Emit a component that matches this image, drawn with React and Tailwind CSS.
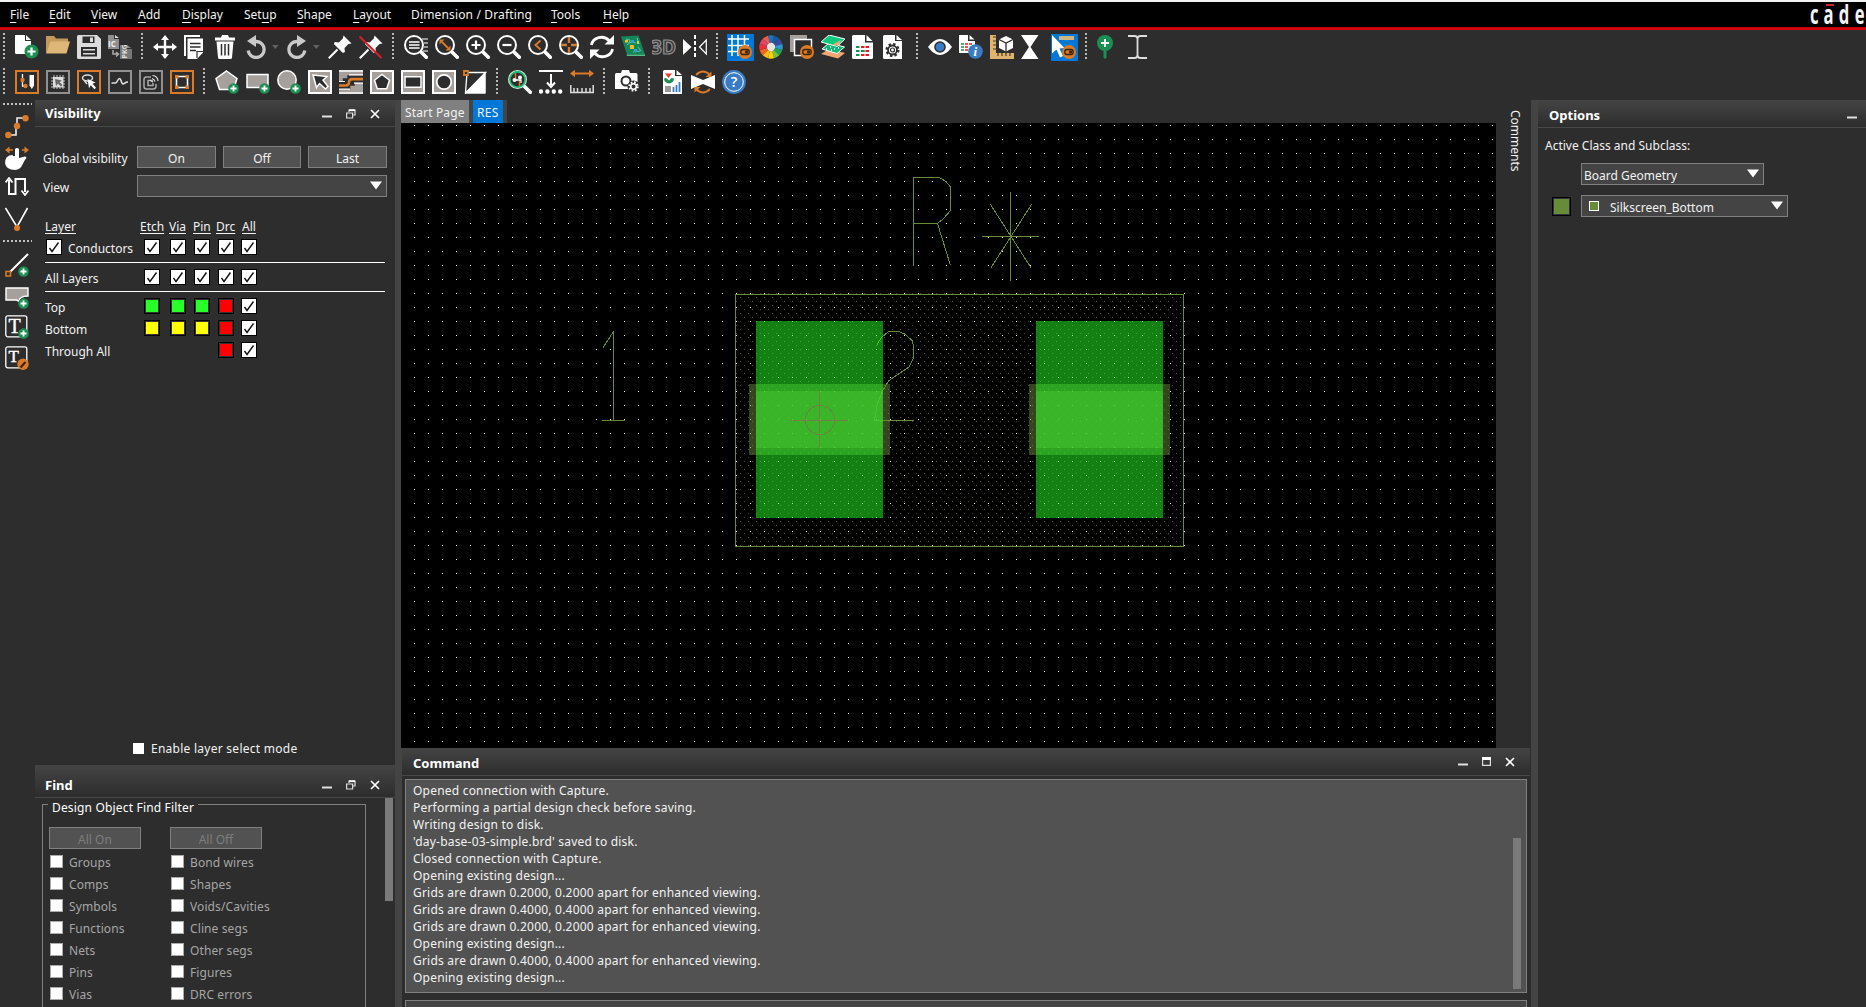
import React from "react";

const OR = "#d97b29";
const GN = "#1c8f55";

const I = ({ children, ml = "", w = 24 }) => (
  <svg width={w} height="24" viewBox={`0 0 ${w} 24`} fill="none" className={`shrink-0 ${ml}`}>
    {children}
  </svg>
);

const Plus = ({ x = 18.5, y = 18.5, r = 5.3 }) => (
  <g>
    <circle cx={x} cy={y} r={r} fill={GN} />
    <path d={`M${x - 3} ${y}h6M${x} ${y - 3}v6`} stroke="#fff" strokeWidth="1.8" />
  </g>
);

const Toggle = ({ x, y }) => (
  <g>
    <circle cx={x} cy={y} r="7" fill={OR} />
    <rect x={x - 4.2} y={y - 2.5} width="8.4" height="5" rx="2.2" stroke="#3a2210" strokeWidth="1.3" />
    <rect x={x} y={y - 1.5} width="3" height="3" rx="1" fill="#3a2210" />
  </g>
);

const Sep = ({ className = "" }) => (
  <svg width="2" height="26" className={`-mt-[2px] shrink-0 ${className}`}>
    <path d="M1 0v26" stroke="#b8b8b8" strokeWidth="2" strokeDasharray="2 2" />
  </svg>
);

const HSep = () => (
  <svg width="29" height="2" className="shrink-0">
    <path d="M0 1h29" stroke="#c0c0c0" strokeWidth="2" strokeDasharray="2 2" />
  </svg>
);

const Lens = ({ children }) => (
  <g>
    <path d="M16.5 16.5L22.3 22.3" stroke="#fff" strokeWidth="3.6" strokeLinecap="round" />
    <circle cx="10" cy="10" r="9" fill="#2d2d2d" stroke="#fff" strokeWidth="2" />
    {children}
  </g>
);

const Framed = ({ c, children, fill = "none" }) => (
  <I>
    <rect x="1" y="1" width="22" height="22" stroke={c} strokeWidth="2" fill={fill} />
    {children}
  </I>
);

const Pin = () => (
  <g>
    <path d="M15.500 .5l8 8-3 .6-4 4 .4 4-2 .9-9-9 .9-2 4 .4 4-4z" fill="#fff" />
    <path d="M9.500 14.500L.8 23.200" stroke="#fff" strokeWidth="2" />
  </g>
);

const Toolbar1 = () => (
  <div className="flex h-[28px] items-center pl-[3px]">
    <Sep />
    <div className="flex gap-[7px] pl-[10px]">
      <I>
        <path d="M0 0h10v6h6v13H1.500Q0 19 0 17.500z" fill="#fff" />
        <path d="M11 0v5h5z" fill="#fff" />
        <circle cx="16.500" cy="16.500" r="7" fill={GN} />
        <path d="M12.500 16.500h8M16.500 12.500v8" stroke="#fff" strokeWidth="2.200" />
      </I>
      <I>
        <path d="M0 1h8l2 2.500h12V8H5L0 18z" fill="#c49a5c" />
        <path d="M4.500 6.500H24L20.500 18.500H0z" fill="#deb778" />
      </I>
      <I>
        <path d="M1.500 0H20l4 4v18.500q0 1.500-1.500 1.500h-21Q0 24 0 22.500v-21Q0 0 1.500 0z" fill="#dcdcdc" />
        <path d="M5.500 1.500h12v6.500h-12zM4 12h16v9.500H4z" fill="#2d2d2d" />
        <path d="M13 2.500h3v4.500h-3zM6 14h12v1.500H6zM6 18h12v1.500H6z" fill="#dcdcdc" />
      </I>
      <I>
        <path d="M0 0h6v4h5v10H0z" fill="#8f8f8f" />
        <path d="M7 0v3h4z" fill="#ddd" />
        <text x="0" y="12" fontSize="8" fontWeight="700" fill="#eee" fontFamily="Open Sans, sans-serif">IC</text>
        <path d="M12 10h6v4h6v10H12z" fill="#777" />
        <path d="M19 10v3h4z" fill="#888" />
        <text x="0" y="0" transform="translate(18.500 23.500) rotate(-90)" fontSize="7" fontWeight="700" fill="#ddd" fontFamily="Open Sans, sans-serif">PKG</text>
        <path d="M5 15v4h5M8 17l2.500 2L8 21.500" stroke="#aaa" strokeWidth="1.500" />
      </I>
    </div>
    <Sep className="ml-[9px]" />
    <div className="flex gap-[7px] pl-[10px]">
      <I>
        <path d="M12 3v18M3 12h18" stroke="#fff" strokeWidth="2.400" />
        <path d="M12 0l4 5H8zM12 24l4-5H8zM0 12l5-4v8zM24 12l-5-4v8z" fill="#fff" />
      </I>
      <I>
        <path d="M0 0h16v2H2v19H0z" fill="#fff" />
        <path d="M3.500 3.500h15.500v14L13 24H3.500z" fill="#fff" />
        <path d="M6 8.500h10.500M6 12h10.500M6 15.500h6" stroke="#2d2d2d" strokeWidth="1.600" />
        <path d="M13 23v-6.500h6" stroke="#2d2d2d" strokeWidth="1.200" />
      </I>
      <I>
        <path d="M7 0h6l1 2.500h6v3H0v-3h6zM1.500 6.500h17L17 22.500q0 1.500-1.500 1.500h-11Q3 24 3 22.500z" fill="#fff" />
        <path d="M6.500 9v11.500M10 9v11.500M13.500 9v11.500" stroke="#2d2d2d" strokeWidth="1.500" />
      </I>
      <I>
        <path d="M8 6.500H10.500A8 8 0 1 1 2.200 15.500" stroke="#c9c9c9" strokeWidth="3.300" />
        <path d="M10 0v12L1 6z" fill="#c9c9c9" />
      </I>
      <svg width="7" height="24" className="-ml-[5px] mr-px"><path d="M0 10h6.500l-3.200 4z" fill="#626262" /></svg>
      <I>
        <path d="M12 6.500H9.500A8 8 0 1 0 17.800 15.500" stroke="#c9c9c9" strokeWidth="3.300" />
        <path d="M10 0v12l9-6z" fill="#c9c9c9" />
      </I>
      <svg width="7" height="24" className="-ml-[5px] mr-px"><path d="M0 10h6.500l-3.200 4z" fill="#626262" /></svg>
      <I><Pin /></I>
      <I><Pin /><path d="M.5 1.500L22.500 23" stroke="#d3202a" strokeWidth="2" /></I>
    </div>
    <Sep className="ml-[9px]" />
    <div className="flex gap-[7px] pl-[10px]">
      <I>
        <path d="M18 4h6M20 8h4M20 12h4M19 16h5" stroke="#bbb" strokeWidth="1.600" />
        <Lens><path d="M5 7h10.500M5 10h10.500M5 13h10.500" stroke="#fff" strokeWidth="1.600" /></Lens>
      </I>
      <I><Lens><path d="M7 7l6 6" stroke={OR} strokeWidth="1.800" /><path d="M4.500 4.500h5l-5 5zM15.500 15.500h-5l5-5z" fill={OR} /></Lens></I>
      <I><Lens><path d="M5.500 10h9M10 5.500v9" stroke="#fff" strokeWidth="2.200" /></Lens></I>
      <I><Lens><path d="M5.500 10h9" stroke="#fff" strokeWidth="2.200" /></Lens></I>
      <I><Lens><path d="M12.500 5.500L7.500 10l5 4.500" stroke={OR} strokeWidth="1.900" /></Lens></I>
      <I><Lens><path d="M10 2v6M10 12v6M2 10h6M12 10h6" stroke={OR} strokeWidth="2.400" /></Lens></I>
      <I>
        <path d="M1.500 10A10 9 0 0 1 19 5.500M22.500 14A10 9 0 0 1 5 18.500" stroke="#fff" strokeWidth="2.800" />
        <path d="M24 0v9.500h-9.500zM0 24v-9.500h9.500z" fill="#fff" />
      </I>
      <I>
        <path d="M0 1.500l17.500-1L24 19.500H6z" fill="#17855a" />
        <path d="M5.500 19.500H24v1.500H6z" fill="#4fc08a" />
        <path d="M5 4l4 1-1 3M16 3l2 6M6 10l4-3 5 1M12 17l7-1M17 12l3 4" stroke="#62c899" strokeWidth="1" />
        <path d="M4 5h3v2.500H4zM9 10h4v4H9z" fill="#f0c11e" />
        <path d="M10 5h3v3h-3zM13 14h3v3h-3z" fill="#2fa0e0" />
        <path d="M16 6h2v3h-2z" fill="#b9d94f" />
      </I>
      <I>
        <text x="-1" y="19" fontSize="19" fontWeight="700" textLength="25" lengthAdjust="spacingAndGlyphs" fill="#3a3a3a" stroke="#909090" strokeWidth="1.200" fontFamily="Open Sans, sans-serif">3D</text>
      </I>
      <I>
        <path d="M0 4l8.500 8L0 20z" fill="#fff" />
        <path d="M12 0v24" stroke="#fff" strokeWidth="2" strokeDasharray="4 2" />
        <path d="M23.300 5v14L16.500 12z" stroke="#fff" strokeWidth="1.200" />
      </I>
    </div>
    <Sep className="ml-[9px]" />
    <div className="flex h-6 items-start gap-[7px] pl-[9px]">
      <svg width="27" height="27" viewBox="0 0 27 27" fill="none" className="-mr-[3px] -mt-px shrink-0">
        <path d="M0 0h27v27H0z" fill="#0078d7" />
        <path d="M5 1v21M11 1v21M17.500 1v12M1 5h21M1 11.500h21M1 17.500h12" stroke="#fff" strokeWidth="1.500" />
        <Toggle x={18} y={18} />
      </svg>
      <I ml="ml-[1px]">
        <g strokeWidth="7.500">
          {["#1a75bc", "#1b5aa0", "#3c4a9e", "#2a9ad0", "#1fa055", "#7ac143", "#ffd400", "#fdb913", "#f26522", "#ee2e38", "#e0456b", "#ee5a52"].map((c, i) => (
            <path key={c} d="M12 4A8 8 0 0 1 16 5.070" stroke={c} transform={`rotate(${i * 30 - 15} 12 12)`} />
          ))}
        </g>
        <circle cx="12" cy="12" r="4.200" fill="#e9e4de" />
      </I>
      <I>
        <path d="M0 0h17v17H0z" fill="#a6a09c" />
        <path d="M4.500 4.500h17v16h-17z" fill="#2d2d2d" stroke="#fff" strokeWidth="1.500" />
        <Toggle x={17} y={17} />
      </I>
      <I>
        <path d="M0 19l8-5 16 4-7 5.500z" fill="#f2a673" />
        <path d="M1 14l7-6 15.500 4L16 18.500z" fill="#12b977" stroke="#fff" strokeWidth="1" />
        <path d="M5 14h1M9 12h1M13 14h1M10 15h1M17 13h1" stroke="#fff" strokeWidth="1.500" />
        <path d="M0 7l8-7 16 4-8 7.500z" fill="#0fc97e" stroke="#fff" strokeWidth="1" />
        <path d="M11 10l9-5-2.500 5.500z" fill="#f2a673" />
      </I>
      <I>
        <path d="M0 1.500Q0 0 1.500 0H13v7.500h8v15q0 1.500-1.500 1.500h-18Q0 24 0 22.500z" fill="#fff" />
        <path d="M14.500 0v6H20.500z" fill="#fff" />
        <path d="M4 12h3.500M4 16h3.500M4 20h3.500" stroke={GN} strokeWidth="2" />
        <path d="M9 12h3.500M13.500 12h3.500M9 16h3.500M13.500 16h3.500M9 20h3.500M13.500 20h3.500" stroke="#d62027" strokeWidth="2" />
        <path d="M9 16h3.500" stroke={GN} strokeWidth="2" />
      </I>
      <I>
        <path d="M0 1.500Q0 0 1.500 0H12v6h7v18H1.500Q0 24 0 22.500z" fill="#fff" />
        <path d="M13.500 0v5h5.500z" fill="#fff" />
        <circle cx="9.500" cy="15" r="5.800" stroke="#2d2d2d" strokeWidth="2.500" strokeDasharray="2.300 2.250" />
        <circle cx="9.500" cy="15" r="4.500" stroke="#2d2d2d" strokeWidth="1.800" fill="#fff" />
        <circle cx="9.500" cy="15" r="2" stroke="#2d2d2d" strokeWidth="1.200" />
      </I>
    </div>
    <Sep className="ml-[9px]" />
    <div className="flex h-6 items-start gap-[7px] pl-[10px]">
      <I>
        <path d="M0 12Q12-4 24 12Q12 28 0 12z" fill="#fff" />
        <circle cx="12" cy="12" r="5.800" fill="#2d2d2d" />
        <circle cx="12" cy="12" r="4.300" fill="#3a7cc4" />
      </I>
      <I>
        <path d="M0 0h9v6h7v12H0z" fill="#fff" />
        <path d="M10.500 0v4.500h5z" fill="#fff" />
        <path d="M2 9h3M2 12h3M2 15h3" stroke={GN} strokeWidth="1.600" />
        <path d="M6 9h3M10 9h3M6 12h3M6 15h3" stroke="#d62027" strokeWidth="1.600" />
        <circle cx="16.500" cy="16.500" r="7.300" fill="#3a7cc4" />
        <text x="14.500" y="21" fontSize="13" fontWeight="700" fontStyle="italic" fill="#fff" fontFamily="Liberation Serif, serif">i</text>
      </I>
      <I>
        <path d="M0 0h6v18h18v6H0z" fill="#deb46f" />
        <path d="M3 2h3M3 6h3M3 10h3M3 14h3M8 18v3M12 18v3M16 18v3M20 18v3" stroke="#4a3a20" strokeWidth="1.200" />
        <path d="M9 4.500L16 1l7 3.500v8.500L16 16.500 9 13z" fill="#fff" />
        <path d="M9 4.500l7 3.500 7-3.500M16 8v8.500" stroke="#2d2d2d" strokeWidth="1.300" />
      </I>
      <I><path d="M0 0h17.500L9.500 12 17.500 24H0L8 12z" fill="#fff" /></I>
      <svg width="27" height="27" viewBox="0 0 27 27" fill="none" className="-ml-px -mr-[3px] -mt-px shrink-0">
        <path d="M0 0h27v27H0z" fill="#0078d7" />
        <path d="M8 2h15v4H8z" fill="#cdb583" />
        <path d="M1 1v18.500l4.500-4L9 23.500l3-1.500-3.500-7.500 5-.5z" fill="#fff" />
        <Toggle x={18} y={18} />
      </svg>
    </div>
    <Sep className="ml-[10px]" />
    <div className="flex gap-[7px] pl-[8px]">
      <I>
        <circle cx="10" cy="8" r="8" fill={GN} />
        <path d="M8.500 14h3v8.500l-1.500 1.500-1.500-1.500z" fill={GN} />
        <path d="M6 8h8M10 4v8" stroke="#fff" strokeWidth="1.800" />
      </I>
      <I><path d="M2 1h6.500q3 0 3 3v16q0 3-3 3H2M21 1h-6.500q-3 0-3 3v16q0 3 3 3H21" stroke="#ddd" strokeWidth="1.800" /></I>
    </div>
  </div>
);

const Toolbar2 = () => (
  <div className="mt-[7px] flex h-[28px] items-center pl-[3px]">
    <Sep />
    <div className="flex gap-[7px] pl-[10px]">
      <Framed c={OR}>
        <path d="M7.500 4v6M7.500 12v4H11" stroke="#fff" strokeWidth="1.300" />
        <circle cx="7.500" cy="10" r="2.200" fill={OR} /><circle cx="10.500" cy="16" r="2.200" fill={OR} />
        <path d="M14.500 5h4.500v10.500l-2.200 3.500-2.300-3.500z" fill="#fff" />
      </Framed>
      <Framed c="#909090">
        <path d="M7 7h10v10H7z" fill="#ddd" />
        <path d="M5 8h14M5 11h14M5 14h14M5 17h14M8 5v14M11 5v14M14 5v14M17 5v14" stroke="#ddd" strokeWidth=".9" />
        <path d="M9 9l7 1.500-2.500 1.500 3 3-1.500 1.500-3-3L10 16z" fill="#666" />
      </Framed>
      <Framed c={OR}>
        <ellipse cx="10.500" cy="8" rx="5" ry="3" stroke="#ddd" strokeWidth="1.500" />
        <path d="M7 10l3 4" stroke="#ddd" strokeWidth="1.500" />
        <path d="M10.500 9l8 3.500-3 1.200 3.500 4-1.500 1.500-3.700-4-1.800 3z" fill="#fff" />
      </Framed>
      <Framed c="#909090"><path d="M3.500 13h4c2 0 2-4.500 4-4.500s1.500 5.500 3.500 5.500 1.500-2 5-2" stroke="#e0e0e0" strokeWidth="1.600" /></Framed>
      <Framed c="#909090">
        <path d="M12 7H7.500Q5 7 5 9.500v7Q5 19 7.500 19h6.500q3 0 3-2.500V14M14 10.500H9V15.500h5V13" stroke="#a8a8a8" strokeWidth="1.500" />
        <path d="M13 8.500a4 4 0 0 1 3 3M13.500 5.500a6 6 0 0 1 5.500 5.500M11 10l3 2" stroke="#ddd" strokeWidth="1.200" />
      </Framed>
      <Framed c={OR}>
        <path d="M6.500 6.500h11v11h-11z" stroke="#fff" strokeWidth="1.600" />
        <path d="M5 5h3.500v3.500H5zM15.500 5H19v3.500h-3.500zM5 15.500h3.500V19H5zM15.500 15.500H19V19h-3.500z" fill={OR} />
      </Framed>
    </div>
    <Sep className="ml-[9px]" />
    <div className="flex gap-[7px] pl-[10px]">
      <I><path d="M11.500 1L22 8.500 18.500 19.500H4.500L1 8.500z" fill="#a6a09c" stroke="#fff" strokeWidth="1.500" /><Plus /></I>
      <I><path d="M1 4.500h21v13H1z" fill="#a6a09c" stroke="#fff" strokeWidth="1.500" /><Plus /></I>
      <I><circle cx="10" cy="10" r="9.200" fill="#a6a09c" stroke="#fff" strokeWidth="1.500" /><Plus /></I>
      <Framed c="#fff" fill="#a6a09c"><path d="M5 5l14 1.500-4 3.500 5 6.500-2.500 2.500-6-5.500-3 4z" fill="#2d2d2d" stroke="#fff" strokeWidth="1.500" /></Framed>
      <I>
        <path d="M0 0h24v24H0z" fill="#a6a09c" />
        <path d="M0 1h24M0 23h24" stroke="#fff" strokeWidth="1.600" />
        <path d="M0 15.500h7.500V12h4.500V9h12" stroke="#2d2d2d" strokeWidth="7.500" />
        <path d="M0 11.500h6M10 4.800h14M0 19.200h11M15 13.200h9" stroke="#fff" strokeWidth="1.200" />
        <path d="M0 15.500h7q3 0 3-3.200t3-3.200h11" stroke={OR} strokeWidth="2.600" />
      </I>
      <Framed c="#fff" fill="#a6a09c"><path d="M12 4.500l7.500 5.700-2.800 8.600H7.300L4.500 10.200z" stroke="#fff" strokeWidth="1.500" fill="#2d2d2d" /></Framed>
      <Framed c="#fff" fill="#a6a09c"><path d="M3.500 6h17v12h-17z" fill="#2d2d2d" /><path d="M4 6.800h16v10.400H4z" stroke="#fff" strokeWidth="1.500" fill="#2d2d2d" /></Framed>
      <Framed c="#fff" fill="#a6a09c"><circle cx="12" cy="12" r="7.200" stroke="#fff" strokeWidth="1.700" fill="#2d2d2d" /></Framed>
      <I>
        <path d="M22.500 2.500v21H2.500z" fill="#fff" />
        <path d="M4 2.500h18.500L2.500 23z" stroke="#fff" strokeWidth="1.300" fill="#2d2d2d" />
        <path d="M22.500 2.500v21H2.500z" fill="#fff" />
        <path d="M1 1h4v4H1z" stroke={OR} strokeWidth="1.800" fill="#2d2d2d" />
      </I>
    </div>
    <Sep className="ml-[9px]" />
    <div className="flex gap-[7px] pl-[10px]">
      <I>
        <path d="M16.500 16.500L22.300 22.300" stroke="#fff" strokeWidth="3.600" strokeLinecap="round" />
        <circle cx="9.500" cy="9.500" r="8.700" stroke="#c5efd8" strokeWidth="1.600" />
        <circle cx="9.500" cy="9.500" r="7.600" stroke="#22b573" strokeWidth="1.600" />
        <path d="M7.500 3v6M11.500 10v6" stroke={OR} strokeWidth="1.400" />
        <circle cx="6.500" cy="10" r="2" fill="#fff" /><circle cx="12" cy="7.500" r="2" fill="#fff" /><path d="M7 10h6v3" stroke="#fff" strokeWidth="1.300" />
      </I>
      <I>
        <path d="M0 1h24" stroke="#fff" strokeWidth="2" /><path d="M12 4v11" stroke="#fff" strokeWidth="2" />
        <path d="M8 12.500l4 4.500 4-4.500" stroke="#fff" strokeWidth="2" />
        <path d="M2 21.500h21" stroke="#fff" strokeWidth="4.400" strokeDasharray="0 6.400" strokeLinecap="round" />
      </I>
      <I>
        <path d="M3 3.500h18" stroke={OR} strokeWidth="2" /><path d="M0 3.500L5-.3v7.600zM24 3.500L19-.3v7.600z" fill={OR} />
        <path d="M0 22.500h24M.8 15v8M23.200 15v8M4 18v4M7.500 18v4M12 18v4M16 18v4M20 18v4" stroke="#ddd" strokeWidth="1.500" />
      </I>
    </div>
    <Sep className="ml-[9px]" />
    <div className="flex pl-[10px]">
      <I>
        <path d="M1.500 3H6l1-3h7l1 3h6q1.500 0 1.500 1.500V12l-8 7H0V4.500Q0 3 1.500 3z" fill="#fff" />
        <circle cx="11" cy="11" r="4.500" stroke="#2d2d2d" strokeWidth="2" />
        <circle cx="18.500" cy="16.500" r="6" fill="#2d2d2d" />
        <circle cx="18.500" cy="16.500" r="4.200" stroke="#fff" strokeWidth="2" strokeDasharray="1.700 1.600" />
        <circle cx="18.500" cy="16.500" r="2.800" stroke="#fff" strokeWidth="1.600" />
      </I>
    </div>
    <Sep className="ml-[9px]" />
    <div className="flex gap-[7px] pl-[10px]">
      <I>
        <g transform="translate(3 0)">
          <path d="M0 1.500Q0 0 1.500 0H12v6h7v18H0z" fill="#fff" /><path d="M13.500 0v5h5.500z" fill="#fff" />
          <path d="M2 3.500h7L5.500 8z" fill="#d8442a" />
          <path d="M1 8.500a5 5 0 0 0 10 0L8.500 8 6 10.500 3 8z" fill={GN} />
          <path d="M2 16h6v6H2z" fill="#9a9a9a" />
          <path d="M10.500 17v5M13.500 15v7M16.500 12v10" stroke="#3a7cc4" strokeWidth="1.800" />
        </g>
      </I>
      <I>
        <path d="M0 5l12 5 12-5v14l-12-5-12 5z" fill="#fff" />
        <path d="M5 5Q12-2 19 5M5 19q7 7 14 0" stroke={OR} strokeWidth="1.800" />
        <path d="M20.500 1.500v5.500h-6zM3.500 22.500V17h6z" fill={OR} />
      </I>
      <I>
        <circle cx="12" cy="12" r="11.900" fill="#3a7cc4" /><circle cx="12" cy="12" r="9.300" stroke="#fff" strokeWidth="1" />
        <text x="12" y="17.200" textAnchor="middle" fontSize="14.500" fontWeight="600" fill="#fff" fontFamily="Open Sans, sans-serif">?</text>
      </I>
    </div>
  </div>
);

const MENU = [
  ["", "F", "ile", "w-[39px]"], ["", "E", "dit", "w-[42px]"], ["", "V", "iew", "w-[47px]"], ["", "A", "dd", "w-[44px]"],
  ["", "D", "isplay", "w-[62px]"], ["Set", "u", "p", "w-[53px]"], ["", "S", "hape", "w-[56px]"], ["", "L", "ayout", "w-[58px]"],
  ["D", "i", "mension / Drafting", "w-[140px] tracking-[0.15px]"], ["", "T", "ools", "w-[52px]"], ["", "H", "elp", "w-[40px]"],
];

const Minimize = () => <svg width="10" height="11"><path d="M0 8.500h10" stroke="#e0e0e0" strokeWidth="2" /></svg>;
const Restore = () => (
  <svg width="10" height="10" fill="none"><path d="M3 3V1h6v5H7" stroke="#ddd" strokeWidth="1.200" /><path d="M3 1.200h6" stroke="#fff" strokeWidth="1.800" /><path d="M.6 4h6v5h-6z" stroke="#ddd" strokeWidth="1.200" /></svg>
);
const Maximize = () => <svg width="9" height="9" fill="none"><path d="M.6.6h7.800v7.800H.6z" stroke="#ddd" strokeWidth="1.200" /><path d="M0 1.500h9" stroke="#fff" strokeWidth="3" /></svg>;
const Close = () => <svg width="10" height="10"><path d="M1 1l8 8M9 1L1 9" stroke="#fff" strokeWidth="1.700" /></svg>;

const Header = ({ title, h, pt, children }) => (
  <div className={`flex shrink-0 items-start border-b border-[#484848] bg-linear-to-b from-[#444] to-[#2d2d2d] ${h}`}>
    <div className={`text-[13px] font-bold leading-[17px] text-white ${pt}`}>{title}</div>
    {children}
  </div>
);

const Check = ({ ml = "" }) => (
  <svg width="16" height="16" className={`shrink-0 ${ml}`}>
    <path d="M0 0h16v16H0z" fill="#000" /><path d="M1 1h14v14H1z" fill="#fff" />
    <path d="M3.500 9l2.500 3.500L12.500 3.500" stroke="#111" strokeWidth="1.400" fill="none" />
  </svg>
);

const SW = { g: "bg-[#28ff28]", y: "bg-[#ffff00]", r: "bg-[#ff0000]" };
const Cell = ({ k }) =>
  k === "c" ? <Check /> : k === "-" ? <div className="size-4" /> : (
    <div className="size-4 border border-black bg-[#333] p-px"><div className={`size-3 ${SW[k]}`} /></div>
  );

const Row = ({ label, cells, mt, box }) => (
  <div className={`flex h-4 items-center ${mt}`}>
    <div className="flex w-[99px] items-center whitespace-nowrap leading-4">
      {box && <Check ml="ml-[1px] mr-[6px]" />}
      <span className="pt-[3px]">{label}</span>
    </div>
    <div className="grid grid-cols-[26px_24px_24px_23px_16px]">
      {cells.split("").map((k, i) => <Cell key={i} k={k} />)}
    </div>
  </div>
);

const Btn = ({ children, className }) => (
  <div className={`flex h-[22px] items-center justify-center border border-[#808080] bg-[#525252] pt-[4px] ${className}`}>{children}</div>
);

const Combo = ({ className, children }) => (
  <div className={`flex h-[22px] items-center justify-between border border-[#808080] bg-[#444] pr-[4px] ${className}`}>
    <div className="flex items-center pt-[3px]">{children}</div>
    <svg width="12" height="9" className="mb-[2px]"><path d="M0 .5h12L6 8.500z" fill="#fff" /></svg>
  </div>
);

const FIND = [["Groups", "Bond wires"], ["Comps", "Shapes"], ["Symbols", "Voids/Cavities"], ["Functions", "Cline segs"], ["Nets", "Other segs"], ["Pins", "Figures"], ["Vias", "DRC errors"]];

const LeftPanels = () => (
  <div className="flex w-[360px] flex-col">
    <Header title="Visibility" h="h-[27px] pl-[10px]" pt="pt-[5px]">
      <div className="ml-auto mr-[15px] mt-[8px] flex items-center gap-[14px]"><Minimize /><Restore /><Close /></div>
    </Header>
    <div className="flex h-[638px] flex-col pl-[8px] pt-[19px]">
      <div className="flex">
        <div className="w-[94px] whitespace-nowrap pt-[5px] leading-4">Global visibility</div>
        <Btn className="w-[79px]">On</Btn><Btn className="ml-[7px] w-[78px]">Off</Btn><Btn className="ml-[7px] w-[79px]">Last</Btn>
      </div>
      <div className="mt-[7px] flex">
        <div className="w-[94px] pt-[5px] leading-4">View</div>
        <Combo className="w-[250px]" />
      </div>
      <div className="mt-[22px] flex pl-[2px] leading-4 underline underline-offset-[2px]">
        <div className="w-[95px]">Layer</div><div className="w-[29px]">Etch</div><div className="w-[24px]">Via</div><div className="w-[23px]">Pin</div><div className="w-[26px]">Drc</div><div>All</div>
      </div>
      <div className="pl-[2px]">
        <Row label="Conductors" cells="ccccc" mt="mt-[4px]" box />
        <div className="mt-[7px] h-px w-[340px] bg-white" />
        <Row label="All Layers" cells="ccccc" mt="mt-[6px]" />
        <div className="mt-[6px] h-px w-[340px] bg-white" />
        <Row label="Top" cells="gggrc" mt="mt-[6px]" />
        <Row label="Bottom" cells="yyyrc" mt="mt-[6px]" />
        <Row label="Through All" cells="---rc" mt="mt-[6px]" />
      </div>
      <div className="mb-[8px] mt-auto flex items-center pl-[90px] leading-4 tracking-[0.26px]">
        <div className="mb-px mr-[7px] size-[11px] bg-white" /><span>Enable layer select mode</span>
      </div>
    </div>
    <Header title="Find" h="h-[33px] pl-[10px]" pt="pt-[12px]">
      <div className="ml-auto mr-[15px] mt-[14px] flex items-center gap-[14px]"><Minimize /><Restore /><Close /></div>
    </Header>
    <div className="flex h-[209px] pl-[7px]">
      <div className="mt-[6px] h-[203px] w-[324px] border border-b-0 border-[#808080] pl-[6px]">
        <div className="-ml-px -mt-[5px] h-4 w-fit whitespace-nowrap bg-[#2d2d2d] px-1 leading-4 tracking-[0.17px] text-white">Design Object Find Filter</div>
        <div className="mt-[11px] flex gap-[29px] text-[#7d7d7d]"><Btn className="w-[92px]">All On</Btn><Btn className="w-[92px]">All Off</Btn></div>
        <div className="mt-[6px] grid grid-cols-[121px_150px] pl-[1px] text-[#a6a6a6]">
          {FIND.flat().map((t) => (
            <div key={t} className="flex h-[22px] items-start leading-4">
              <div className="mr-[6px] size-[13px] border border-[#aaa] bg-white" /><span className="tracking-[0.1px]">{t}</span>
            </div>
          ))}
        </div>
      </div>
      <div className="ml-[19px] h-[103px] w-2 bg-[#7a7a7a]" />
    </div>
  </div>
);

const SideBar = () => (
  <div className="flex w-[35px] flex-col pl-[3px] pt-[3px]">
    <HSep />
    <div className="flex flex-col pl-[2px]">
      <svg width="24" height="24" fill="none" className="mt-[10px]"><path d="M12 11V3h8M3 20h8v-9" stroke="#eee" strokeWidth="1.600" /><circle cx="20.500" cy="3.300" r="3.200" fill={OR} /><circle cx="12" cy="11" r="3.200" fill={OR} /><circle cx="3.300" cy="20" r="3.200" fill={OR} /></svg>
      <svg width="24" height="24" fill="none" className="mt-[7px]"><path d="M10 3q2-2 4 0v9l6-1.500q2 0 1 2-2 2.500-3.500 6-2 5-7.500 5.500Q1 24 0 17q0-3 1.500-5.500Q4 8.500 7.500 9l.5 1h2z" fill="#fff" /><path d="M4 4h4M17 4h4" stroke={OR} strokeWidth="1.600" /><path d="M0 4l4.500-3.500v7zM24 4L19.500.5v7z" fill={OR} /></svg>
      <svg width="24" height="19" fill="none" className="mt-[7px]"><path d="M4 3v14h6.500V2H20v13" stroke="#fff" strokeWidth="2" /><path d="M.5 5.500L4 1l3.500 4.500M16.500 13.500L20 18l3.500-4.500" stroke="#fff" strokeWidth="1.800" /></svg>
      <svg width="24" height="24" fill="none" className="mt-[11px]"><path d="M.5 1L12 20 22.500 1" stroke="#fff" strokeWidth="1.600" /><circle cx="12" cy="21" r="3" fill={OR} /></svg>
    </div>
    <div className="mt-[9px] flex h-[2px]"><HSep /></div>
    <div className="flex flex-col pl-[2px]">
      <svg width="24" height="24" fill="none" className="mt-[11px]"><path d="M5 19L23 1" stroke="#fff" strokeWidth="2" /><path d="M1 18.500h4.500V23H1z" stroke={OR} strokeWidth="1.600" /><Plus /></svg>
      <svg width="24" height="24" fill="none" className="mt-[9px]"><path d="M1 2h22v8q-9 0-9 6-1-2-3-2H1z" fill="#a6a09c" stroke="#fff" strokeWidth="1.400" /><Plus y={17.5} /></svg>
      <svg width="24" height="24" fill="none" className="mt-[5px]"><rect x=".8" y=".8" width="21" height="21" rx="2" stroke="#fff" strokeWidth="1.300" /><text x="3.500" y="17.500" fontSize="20" fill="#fff" stroke="#fff" strokeWidth=".4" fontFamily="Liberation Serif, serif">T</text><Plus /></svg>
      <svg width="24" height="24" fill="none" className="mt-[7px]"><rect x=".8" y=".8" width="21" height="21" rx="2" stroke="#fff" strokeWidth="1.300" /><text x="3.500" y="15.500" fontSize="17" fill="#fff" stroke="#fff" strokeWidth=".4" fontFamily="Liberation Serif, serif">T</text><circle cx="18" cy="18.300" r="5.700" fill={OR} /><path d="M15.500 21.500l5-5.500" stroke="#3a2210" strokeWidth="2" /></svg>
    </div>
  </div>
);

const Pad = ({ x }) => <rect x={x} y="321" width="127" height="197" fill="#28ff28" fillOpacity=".5" />;
const PadBar = ({ x }) => (
  <g fill="#668c3a" fillOpacity=".5">
    <rect x={x - 7} y="384" width="141" height="71" />
    <rect x={x} y="391" width="127" height="57" />
  </g>
);

const Canvas = () => (
  <svg width="1095" height="625" viewBox="401 123 1095 625" fill="none" shapeRendering="crispEdges" className="block shrink-0 bg-black">
    <defs>
      <pattern id="grid" x="414" y="125" width="14" height="14" patternUnits="userSpaceOnUse"><rect width="1" height="1" fill="#fff" /></pattern>
      <pattern id="fill" x="736" y="293" width="8" height="8" patternUnits="userSpaceOnUse"><rect width="1" height="1" fill="#484f34" /><rect x="4" y="4" width="1" height="1" fill="#484f34" /></pattern>
    </defs>
    <rect x="735" y="293" width="449" height="254" fill="url(#fill)" />
    <rect x="401" y="123" width="1095" height="625" fill="url(#grid)" />
    <PadBar x={756} /><PadBar x={1036} />
    <g stroke="#668c3a" strokeWidth="1">
      <rect x="735.500" y="294.500" width="448" height="252" />
      <path d="M913.500 265.500V177.500H939L946 181.500L950.500 187V210.500L943.500 218.500L937.500 223.500H913.500M937.500 223.500L950.500 265.500" />
      <path d="M1010.500 192V281M982 236.500H1039M990.500 204.500L1031.500 268.500M1031.500 204.500L990.500 268.500" />
      <path d="M602.500 348.500L613.500 331.500V420M602 420.500H625" />
      <path d="M876.500 345.500L881 338L888.500 331.500H899L905.500 334.500L912.500 341L913.500 347V358L909 367L889 380.500L883 390L877 405L874.500 420.500H914" />
    </g>
    <Pad x={756} /><Pad x={1036} />
    <g stroke="#757f41">
      <path d="M791 420.500H848M819.500 391V448" />
      <circle cx="820" cy="420" r="14.500" strokeOpacity=".85" />
    </g>
  </svg>
);

const LOG = [
  "Opened connection with Capture.", "Performing a partial design check before saving.", "Writing design to disk.",
  "'day-base-03-simple.brd' saved to disk.", "Closed connection with Capture.", "Opening existing design...",
  "Grids are drawn 0.2000, 0.2000 apart for enhanced viewing.", "Grids are drawn 0.4000, 0.4000 apart for enhanced viewing.",
  "Grids are drawn 0.2000, 0.2000 apart for enhanced viewing.", "Opening existing design...",
  "Grids are drawn 0.4000, 0.4000 apart for enhanced viewing.", "Opening existing design...",
];

const Center = () => (
  <div className="flex w-[1130px] flex-col">
    <div className="flex h-[23px] leading-[23px]">
      <div className="flex w-[106px] gap-1 bg-[#444]">
        <div className="w-[68px] whitespace-nowrap bg-[#808080] pl-[4px] pt-px tracking-[0.15px]">Start Page</div>
        <div className="w-[30px] bg-[#0078d7] pl-[4px] pt-px tracking-[0.3px]">RES</div>
      </div>
    </div>
    <div className="flex">
      <Canvas />
      <div className="-mt-[23px] w-[35px] pt-[10px]"><div className="ml-[11px] leading-4 [writing-mode:vertical-rl]">Comments</div></div>
    </div>
    <div className="flex h-[259px] flex-col overflow-hidden border-l border-[#444] pr-px">
      <Header title="Command" h="h-[28px] pl-[11px]" pt="pt-[7px]">
        <div className="ml-auto mr-[15px] mt-[8px] flex items-center gap-[14px]"><Minimize /><Maximize /><Close /></div>
      </Header>
      <div className="ml-[3px] mt-[3px] flex h-[214px] w-[1122px] shrink-0 border border-[#808080] bg-[#525252]">
        <div className="flex-1 pl-[7px] pt-[2px] tracking-[0.21px]">{LOG.map((t, i) => <div key={i} className="h-[17px] leading-[17px]">{t}</div>)}</div>
        <div className="mr-[5px] mt-[58px] h-[151px] w-2 bg-[#7a7a7a]" />
      </div>
      <div className="ml-[3px] mt-[7px] h-5 w-[1122px] shrink-0 border border-[#808080] bg-[#444]" />
    </div>
  </div>
);

const Options = () => (
  <div className="w-[328px]">
    <Header title="Options" h="h-[28px] pl-[11px]" pt="pt-[7px]"><div className="ml-auto mr-[9px] mt-[9px]"><Minimize /></div></Header>
    <div className="pl-[7px] pt-[10px]">
      <div className="leading-4">Active Class and Subclass:</div>
      <div className="mt-[9px] flex pl-[36px]"><Combo className="w-[183px] pl-[2px]">Board Geometry</Combo></div>
      <div className="mt-[10px] flex items-center pl-[7px]">
        <div className="size-[19px] border border-black bg-[#333] p-px"><div className="size-[15px] bg-[#668c3a]" /></div>
        <Combo className="ml-[10px] w-[207px]"><div className="-mt-[4px] ml-[7px] mr-[11px] size-[10px] border border-white bg-[#668c3a]" />Silkscreen_Bottom</Combo>
      </div>
    </div>
  </div>
);

export default function App() {
  return (
    <div className="flex h-[1007px] w-[1866px] flex-col overflow-hidden bg-[#2d2d2d] font-['Noto_Sans','Open_Sans',sans-serif] text-[12px] text-[#f2f2f2]">
      <div className="flex h-[30px] shrink-0 justify-between overflow-hidden border-b-[3px] border-t-2 border-b-[#cc0000] border-t-[#f3f3f3] bg-black">
        <div className="flex pl-[10px] leading-[25px]">
          {MENU.map(([a, b, c, w]) => (
            <div key={b + c} className={`whitespace-nowrap ${w}`}>{a}<span className="underline underline-offset-[3px]">{b}</span>{c}</div>
          ))}
        </div>
        <svg width="56" height="25">
          <g transform="scale(.64 1)"><text x="0 21 45 70" y="22" fontSize="26" fontWeight="700" fill="#f4f4f4" fontFamily="Open Sans, sans-serif">cade</text></g>
          <path d="M16 2h8v2h-8z" fill="#d0202e" />
        </svg>
      </div>
      <div className="h-[70px] shrink-0 pt-[3px]"><Toolbar1 /><Toolbar2 /></div>
      <div className="flex h-[907px]">
        <SideBar />
        <LeftPanels />
        <div className="w-[6px] bg-[#444]" />
        <Center />
        <div className="w-[7px] bg-[#444]" />
        <Options />
      </div>
    </div>
  );
}
